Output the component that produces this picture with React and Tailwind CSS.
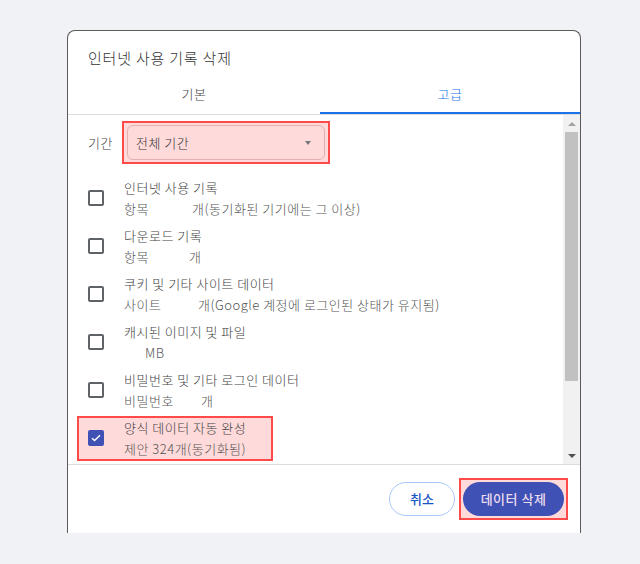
import React from "react";

const font = { fontFamily: '"Noto Sans CJK KR", "Noto Sans", sans-serif' };

const Checkbox = ({ checked }) =>
  checked ? (
    <div className="w-[16px] h-[16px] rounded-[2px] bg-[#3f51b5] flex items-center justify-center shrink-0">
      <svg width="10" height="8" viewBox="0 0 10 8" fill="none">
        <path d="M1 4.2L3.6 6.6L9 1.2" stroke="#fff" strokeWidth="1.4" />
      </svg>
    </div>
  ) : (
    <div className="w-[16px] h-[16px] rounded-[2px] border-2 border-[#5f6368] shrink-0" />
  );

const Row = ({ title, children }) => (
  <div className="h-[48px] flex items-center">
    <Checkbox />
    <div className="ml-[20px] leading-[21px] tracking-[0.5px]">
      <div className="text-[#444]">{title}</div>
      <div className="text-[#555]">{children}</div>
    </div>
  </div>
);

export default function App() {
  return (
    <div className="w-[640px] h-[564px] bg-[#f1f2f6] pt-[30px] pl-[67px] text-[13px] font-light" style={font}>
      <div className="w-[514px] h-[503px] bg-white border border-b-0 border-[#5a5a5a] rounded-t-[8px] flex flex-col">
        {/* header */}
        <div className="h-[44px] pl-[20px] pt-[16px] text-[15px] leading-[22px] tracking-[0.8px] text-[#333]">
          인터넷 사용 기록 삭제
        </div>
        {/* tabs */}
        <div className="h-[40px] flex border-b border-[#dadce0] tracking-[0.5px]">
          <div className="w-[252px] flex flex-col">
            <div className="flex-1 flex items-center justify-center text-[#444]">기본</div>
            <div className="h-[2px]" />
          </div>
          <div className="flex-1 flex flex-col">
            <div className="flex-1 flex items-center justify-center text-[#1a73e8]">고급</div>
            <div className="h-[2px] bg-[#1a73e8]" />
          </div>
        </div>
        {/* body */}
        <div className="h-[349px] flex">
          <div className="flex-1 pl-[20px]">
            <div className="mt-[6px] flex items-center tracking-[0.5px]">
              <div className="w-[34px] text-[#444]">기간</div>
              <div className="border-2 border-[#ff4a4a] bg-[#ffdada] px-[3px] py-[2px]">
                <div className="w-[198px] h-[35px] rounded-[6px] border border-[#e3b0b0] bg-[#ffdada] flex items-center justify-between pl-[8px] pr-[13px]">
                  <span className="text-[#333]">전체 기간</span>
                  <svg width="6" height="4" viewBox="0 0 6 4">
                    <path d="M0 0H6L3 4Z" fill="#777" />
                  </svg>
                </div>
              </div>
            </div>
            <div className="mt-[10px]">
              <Row title="인터넷 사용 기록">
                <span className="inline-block w-[68px]">항목</span>개(동기화된 기기에는 그 이상)
              </Row>
              <Row title="다운로드 기록">
                <span className="inline-block w-[65px]">항목</span>개
              </Row>
              <Row title="쿠키 및 기타 사이트 데이터">
                <span className="inline-block w-[74px]">사이트</span>개(Google 계정에 로그인된 상태가 유지됨)
              </Row>
              <Row title="캐시된 이미지 및 파일">
                <span className="pl-[21px]">MB</span>
              </Row>
              <Row title="비밀번호 및 기타 로그인 데이터">
                <span className="inline-block w-[77px]">비밀번호</span>개
              </Row>
              <div className="h-[48px] flex items-center">
                <div className="-ml-[11px] w-[196px] h-[45px] border-2 border-[#ff4a4a] bg-[#ffdada] pl-[9px] flex items-center">
                  <Checkbox checked />
                  <div className="ml-[20px] leading-[21px] tracking-[0.5px]">
                    <div className="text-[#444]">양식 데이터 자동 완성</div>
                    <div className="text-[#555]">제안 324개(동기화됨)</div>
                  </div>
                </div>
              </div>
            </div>
          </div>
          {/* scrollbar */}
          <div className="w-[17px] bg-[#f1f1f1] flex flex-col">
            <div className="h-[17px] flex items-center justify-center">
              <svg width="8" height="4" viewBox="0 0 8 4">
                <path d="M0 4H8L4 0Z" fill="#a3a3a3" />
              </svg>
            </div>
            <div className="h-[249px] mx-[2px] bg-[#c1c1c1]" />
            <div className="flex-1" />
            <div className="h-[17px] flex items-center justify-center">
              <svg width="8" height="4" viewBox="0 0 8 4">
                <path d="M0 0H8L4 4Z" fill="#505050" />
              </svg>
            </div>
          </div>
        </div>
        {/* footer */}
        <div className="h-[69px] border-t border-[#dadce0] flex items-center justify-end pr-[12px] gap-[4px]">
          <button className="w-[66px] h-[34px] rounded-full border border-[#a8c7fa] text-[#1a55c4] font-medium">
            취소
          </button>
          <div className="border-2 border-[#ff4a4a] bg-[#ffdada] p-[2px]">
            <button className="w-[101px] h-[34px] rounded-full bg-[#3f51b5] text-[#ecdcef] font-medium tracking-[0.5px]">
              데이터 삭제
            </button>
          </div>
        </div>
      </div>
    </div>
  );
}
